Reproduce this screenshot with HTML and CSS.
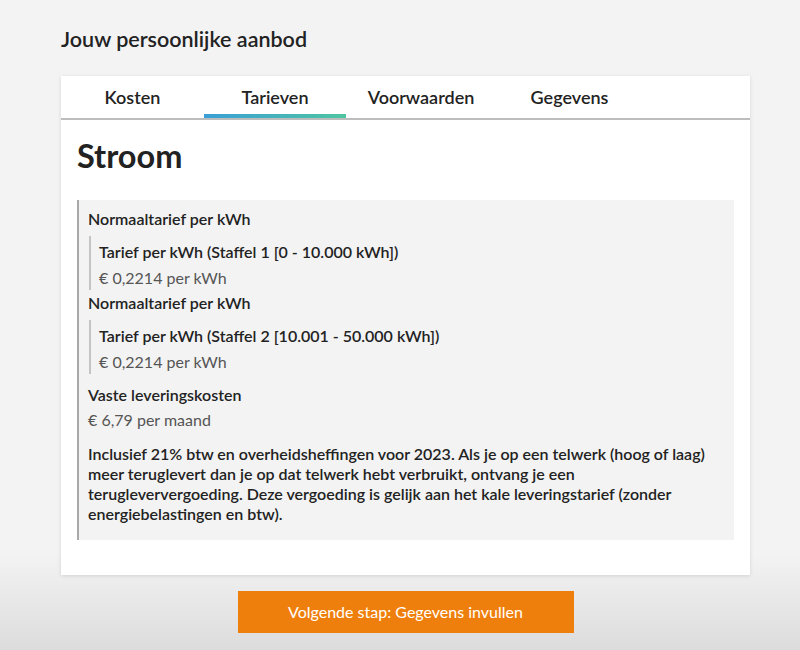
FILE: index.html
```html
<!DOCTYPE html>
<html lang="nl">
<head>
    <meta charset="UTF-8">
    <meta name="viewport" content="width=device-width, initial-scale=1.0">
    <title>Jouw persoonlijke aanbod</title>
    <link rel="stylesheet" href="styles.css">
</head>
<body>
    <div class="page">
        <h1 class="page_title">Jouw persoonlijke aanbod</h1>

        <div class="offer_card">
            <ul class="tabs">
                <li class="tab tab_kosten"><a href="">Kosten</a></li>
                <li class="tab tab_tarieven active"><a href="">Tarieven</a></li>
                <li class="tab tab_voorwaarden"><a href="">Voorwaarden</a></li>
                <li class="tab tab_gegevens"><a href="">Gegevens</a></li>
            </ul>

            <div class="tab_content">
                <h2 class="product_title">Stroom</h2>

                <div class="rates">
                    <div class="rate_label">Normaaltarief per kWh</div>
                    <div class="rate_step">
                        <div class="rate_label">Tarief per kWh (Staffel 1 [0 - 10.000 kWh])</div>
                        <div class="rate_value">€ 0,2214 per kWh</div>
                    </div>

                    <div class="rate_label">Normaaltarief per kWh</div>
                    <div class="rate_step">
                        <div class="rate_label">Tarief per kWh (Staffel 2 [10.001 - 50.000 kWh])</div>
                        <div class="rate_value">€ 0,2214 per kWh</div>
                    </div>

                    <div class="rate_fixed">
                        <div class="rate_label">Vaste leveringskosten</div>
                        <div class="rate_value">€ 6,79 per maand</div>
                    </div>

                    <p class="rate_note">Inclusief 21% btw en overheidsheffingen voor 2023. Als je op een telwerk (hoog of laag) meer teruglevert dan je op dat telwerk hebt verbruikt, ontvang je een terugleververgoeding. Deze vergoeding is gelijk aan het kale leveringstarief (zonder energiebelastingen en btw).</p>
                </div>
            </div>
        </div>

        <div class="actions">
            <a href="" class="btn_next">Volgende stap: Gegevens invullen</a>
        </div>
    </div>
</body>
</html>
```

FILE: styles.css
```css
*{margin:0; padding:0; box-sizing:border-box;}
a{text-decoration:none; color:inherit;}
ul,li{list-style:none;}

html, body{height:100%;}
body{
    font-family: Lato, "Open Sans", sans-serif;
    color:#222;
    background: linear-gradient(to bottom, #f3f3f3 0, #f3f3f3 555px, #dcdcdc 650px);
    min-height:650px;
}

.page{
    width:689px;
    margin-left:61px;
    padding-top:26px;
}
.page_title{
    font-size:21.5px;
    font-weight:600;
    line-height:26px;
    margin-bottom:24px;
}

.offer_card{
    background:#fff;
    box-shadow: 0 1px 4px rgba(0,0,0,0.12);
    padding-bottom:35px;
}

.tabs{
    display:grid;
    grid-template-columns: 143px 142px 150px 147px;
    border-bottom:2px solid #bdbdbd;
}
.tab a{
    display:block;
    height:42px;
    line-height:42px;
    text-align:center;
    font-size:18px;
    font-weight:600;
    color:#222;
    position:relative;
}
.tab.active a::after{
    content:'';
    position:absolute;
    left:0; right:0; bottom:0;
    height:4px;
    background: linear-gradient(to right, #3b9fd6, #4fc5a2);
}

.tab_content{
    padding:17px 16px 0 16px;
}
.product_title{
    font-size:32.5px;
    font-weight:700;
    line-height:37px;
    margin-bottom:26px;
}

.rates{
    background:#f3f3f3;
    border-left:2px solid #a9a9a9;
    padding:7px 14px 16px 9px;
}
.rate_label{
    font-size:16px;
    font-weight:600;
    line-height:24px;
}
.rate_value{
    font-size:16px;
    line-height:25px;
    color:#555;
}
.rate_step{
    margin:5px 0 1px 1px;
    padding:4px 0 0 8px;
    border-left:2px solid #c4c4c4;
}
.rate_step .rate_value{
    margin-top:2px;
    line-height:24px;
}
.rate_fixed{
    margin-top:9px;
}
.rate_note{
    margin-top:12px;
    font-size:16px;
    font-weight:600;
    line-height:20px;
}

.actions{
    display:flex;
    justify-content:center;
    padding-top:16px;
}
.btn_next{
    display:block;
    width:336px;
    height:42px;
    line-height:42px;
    text-align:center;
    background:#ef7f0c;
    color:#fff;
    font-size:16px;
    font-weight:400;
}
```
